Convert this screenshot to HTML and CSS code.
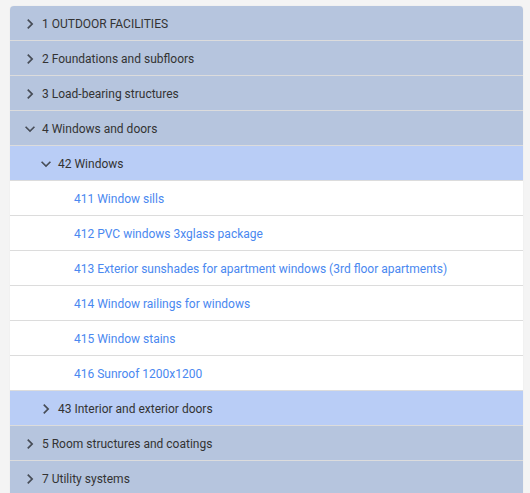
FILE: index.html
```html
<!DOCTYPE html>
<html>
<head>
<meta charset="utf-8">
<link rel="stylesheet" href="styles.css">
</head>
<body>
<div class="tree">
  <div class="row l1"><svg class="chev" viewBox="0 0 24 24"><path d="M10 6L8.59 7.41 13.17 12l-4.58 4.59L10 18l6-6z"/></svg><span>1 OUTDOOR FACILITIES</span></div>
  <div class="row l1"><svg class="chev" viewBox="0 0 24 24"><path d="M10 6L8.59 7.41 13.17 12l-4.58 4.59L10 18l6-6z"/></svg><span>2 Foundations and subfloors</span></div>
  <div class="row l1"><svg class="chev" viewBox="0 0 24 24"><path d="M10 6L8.59 7.41 13.17 12l-4.58 4.59L10 18l6-6z"/></svg><span>3 Load-bearing structures</span></div>
  <div class="row l1"><svg class="chev" viewBox="0 0 24 24"><path d="M16.59 8.59L12 13.17 7.41 8.59 6 10l6 6 6-6z"/></svg><span>4 Windows and doors</span></div>
  <div class="row l2"><svg class="chev" viewBox="0 0 24 24"><path d="M16.59 8.59L12 13.17 7.41 8.59 6 10l6 6 6-6z"/></svg><span>42 Windows</span></div>
  <div class="row leaf"><span>411 Window sills</span></div>
  <div class="row leaf"><span>412 PVC windows 3xglass package</span></div>
  <div class="row leaf"><span>413 Exterior sunshades for apartment windows (3rd floor apartments)</span></div>
  <div class="row leaf"><span>414 Window railings for windows</span></div>
  <div class="row leaf"><span>415 Window stains</span></div>
  <div class="row leaf"><span>416 Sunroof 1200x1200</span></div>
  <div class="row l2"><svg class="chev" viewBox="0 0 24 24"><path d="M10 6L8.59 7.41 13.17 12l-4.58 4.59L10 18l6-6z"/></svg><span>43 Interior and exterior doors</span></div>
  <div class="row l1"><svg class="chev" viewBox="0 0 24 24"><path d="M10 6L8.59 7.41 13.17 12l-4.58 4.59L10 18l6-6z"/></svg><span>5 Room structures and coatings</span></div>
  <div class="row l1"><svg class="chev" viewBox="0 0 24 24"><path d="M10 6L8.59 7.41 13.17 12l-4.58 4.59L10 18l6-6z"/></svg><span>7 Utility systems</span></div>
</div>
</body>
</html>
```
FILE: styles.css
```css
html, body {
  margin: 0;
  padding: 0;
  background: #f4f4f4;
  overflow: hidden;
}
body {
  padding: 6px 7px 0 10px;
  font-family: Roboto, "Liberation Sans", sans-serif;
  font-size: 12px;
}
.tree {
  background: #ffffff;
  border-radius: 4px 4px 0 0;
  overflow: hidden;
  box-shadow: 0 0 1px rgba(0,0,0,0.15);
}
.row {
  height: 32px;
  padding-top: 2px;
  display: flex;
  align-items: center;
  gap: 2px;
  border-bottom: 1px solid #dcdcdc;
  color: #333333;
  box-sizing: content-box;
}
.chev {
  width: 20px;
  height: 20px;
  fill: #474d57;
  flex: none;
}
.l1 {
  background: #b6c5de;
  padding-left: 10px;
}
.l2 {
  background: #b9cdf6;
  padding-left: 26px;
}
.leaf {
  background: #ffffff;
  padding-left: 64px;
  color: #4a88f0;
}
```
